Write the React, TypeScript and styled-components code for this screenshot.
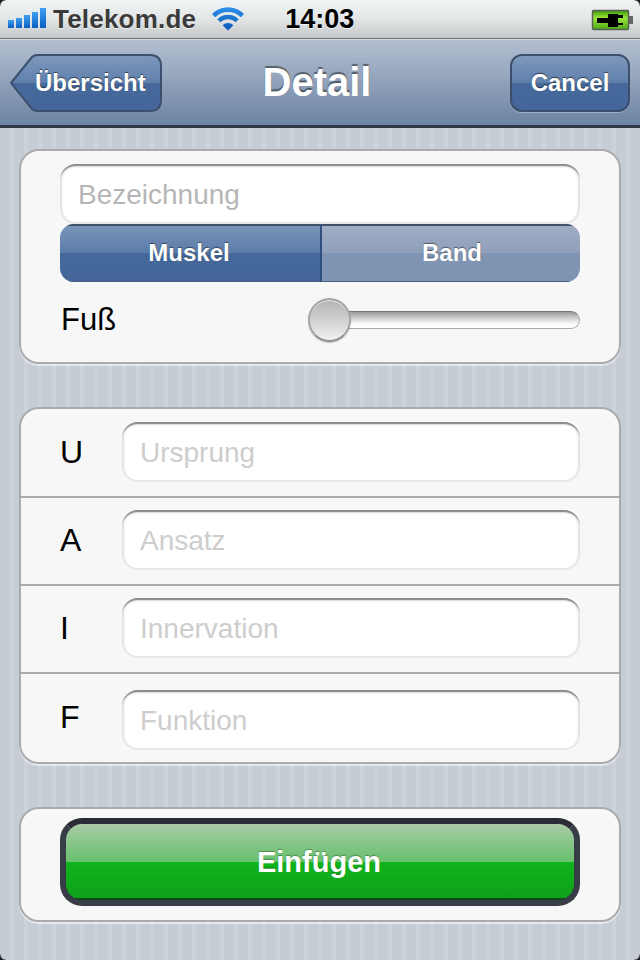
import * as React from 'react';
import styled, { createGlobalStyle } from 'styled-components';

const GlobalStyle = createGlobalStyle`
  html, body {
    margin: 0;
    padding: 0;
    background: #c5ccd4;
  }
  * {
    box-sizing: border-box;
  }
`;

const Screen = styled.div`
  position: relative;
  width: 640px;
  height: 960px;
  overflow: hidden;
  font-family: "Liberation Sans", Arial, sans-serif;
  background: repeating-linear-gradient(90deg, #c5ccd4 0 10px, #cbd2d9 10px 14px);
`;

const Corner = styled.div<{ $right?: boolean; $bottom?: boolean }>`
  position: absolute;
  width: 6px;
  height: 6px;
  ${(p) => (p.$right ? 'right: 0;' : 'left: 0;')}
  ${(p) => (p.$bottom ? 'bottom: 0;' : 'top: 0;')}
  background: radial-gradient(
    circle at ${(p) => (p.$right ? '0' : '100%')} ${(p) => (p.$bottom ? '0' : '100%')},
    transparent 5px,
    #222 6.5px
  );
`;

const StatusBar = styled.div`
  display: flex;
  align-items: center;
  height: 40px;
  padding: 0 6px 1px 8px;
  background: linear-gradient(#f1f4f4, #e4e7e7 45%, #c6c9c9 94%, #6e7277 95%, #6e7277 98%, #d5d8dc 98%);
`;

const SignalBars = styled.svg`
  margin-top: -2px;
`;

const Carrier = styled.span`
  margin-left: 7px;
  font-size: 26px;
  font-weight: bold;
  letter-spacing: 0.2px;
  color: #3a3a3a;
  text-shadow: 0 1px 0 rgba(255, 255, 255, 0.7);
`;

const WifiIcon = styled.svg`
  margin-left: 16px;
  margin-top: -1px;
`;

const Clock = styled.span`
  margin-left: 41px;
  font-size: 27px;
  font-weight: bold;
  color: #000;
  text-shadow: 0 1px 0 rgba(255, 255, 255, 0.7);
`;

const BatteryIcon = styled.svg`
  margin-left: auto;
`;

const NavBar = styled.div`
  display: flex;
  align-items: flex-start;
  height: 88px;
  padding: 14px 10px 0;
  background: linear-gradient(#b3bfd0, #6c83a3 97%, #2f3742 97%);
`;

const BackButton = styled.div`
  position: relative;
  display: flex;
  align-items: center;
  width: 152px;
  height: 58px;
  padding-left: 25px;
`;

const BackShape = styled.svg`
  position: absolute;
  top: 0;
  left: 0;
`;

const BarLabel = styled.span`
  position: relative;
  font-size: 24px;
  font-weight: bold;
  color: #fff;
  text-shadow: 0 -1px 1px rgba(0, 0, 0, 0.55);
`;

const Title = styled.div`
  flex: 1;
  padding-right: 38px;
  margin-top: 3px;
  text-align: center;
  font-size: 40px;
  font-weight: bold;
  line-height: 50px;
  color: #fff;
  text-shadow: 0 -2px 1px rgba(0, 0, 0, 0.45);
`;

const CancelButton = styled.div`
  display: flex;
  align-items: center;
  justify-content: center;
  width: 120px;
  height: 58px;
  border: 2px solid #3c506e;
  border-radius: 12px;
  background: linear-gradient(#7f98bc, #5f80ac 50%, #46699b 50%, #44669a);
  box-shadow: 0 1px 0 rgba(255, 255, 255, 0.3);
`;

const Content = styled.div`
  display: flex;
  flex-direction: column;
  gap: 43px;
  padding: 21px 19px 0;
`;

const Group = styled.div`
  background: #f7f7f7;
  border: 2px solid #ababae;
  border-radius: 20px;
  box-shadow: 0 2px 0 rgba(255, 255, 255, 0.55);
  overflow: hidden;
`;

const TopGroup = styled(Group)`
  height: 215px;
  padding: 13px 39px 0;
`;

const Field = styled.input<{ $faint?: boolean }>`
  display: block;
  width: 100%;
  height: 60px;
  flex: 1;
  padding: 2px 18px 0;
  border: 0;
  border-radius: 16px;
  outline: none;
  background: #fff;
  font-family: inherit;
  font-size: 28px;
  box-shadow:
    inset 0 3px 1px -1px #8a8a8a,
    inset 0 5px 3px -3px #c4c4c4,
    inset 3px 0 2px -1px #e2e2e2,
    inset -3px 0 2px -1px #e2e2e2,
    inset 0 -3px 0 -1px #e8e8e8;
  &::placeholder {
    color: ${(p) => (p.$faint ? '#cdcdcd' : '#b6b6b6')};
    opacity: 1;
  }
`;

const Segments = styled.div`
  display: flex;
  height: 58px;
  border-radius: 14px;
  overflow: hidden;
`;

const Segment = styled.div<{ $active?: boolean }>`
  display: flex;
  align-items: center;
  justify-content: center;
  width: ${(p) => (p.$active ? '262px' : '258px')};
  padding: ${(p) => (p.$active ? '0 2px 0 0' : '0 0 0 2px')};
  font-size: 24px;
  font-weight: bold;
  color: #fff;
  text-shadow: 0 -1px 1px rgba(0, 0, 0, 0.45);
  border-right: ${(p) => (p.$active ? '2px solid #2f4f80' : '0')};
  box-shadow: inset 0 2px 0 #3f5068, inset 0 -1px 0 #4a5f80;
  background: ${(p) =>
    p.$active
      ? 'linear-gradient(#7d96ba, #5a7ba8 50%, #46699b 50%, #44669a)'
      : 'linear-gradient(#a1afc5, #8f9fba 50%, #8094b3 50%, #7e92b1)'};
`;

const SliderRow = styled.div`
  display: flex;
  align-items: center;
  justify-content: space-between;
  height: 44px;
  margin-top: 16px;
`;

const RowName = styled.span`
  margin-left: 1px;
  font-size: 31px;
  color: #000;
`;

const Slider = styled.div`
  position: relative;
  display: flex;
  align-items: center;
  justify-content: flex-end;
  width: 272px;
  height: 44px;
`;

const Track = styled.div`
  width: 240px;
  height: 18px;
  border: 1px solid #a9a9a9;
  border-top-color: #777;
  border-radius: 0 9px 9px 0;
  background: linear-gradient(#9a9a9a, #d8d8d8 45%, #fbfbfb 75%, #fff);
`;

const Thumb = styled.div`
  position: absolute;
  top: 0;
  left: 0;
  width: 43px;
  height: 44px;
  border-radius: 50%;
  border: 2px solid #a4a4a4;
  border-bottom-color: #8c8c8c;
  background: linear-gradient(#b4b4b4, #d6d6d6 60%, #f0f0f0);
  box-shadow: inset 0 1px 0 #e6e6e6, 0 1px 1px rgba(0, 0, 0, 0.25);
`;

const FieldRow = styled.div<{ $top: number; $height: number; $last?: boolean }>`
  display: flex;
  align-items: flex-start;
  height: ${(p) => p.$height}px;
  padding: ${(p) => p.$top}px 39px 0;
  border-bottom: ${(p) => (p.$last ? '0' : '2px solid #ababae')};
`;

const FieldLetter = styled.span<{ $lift: number }>`
  flex: none;
  width: 62px;
  margin-top: ${(p) => -p.$lift}px;
  line-height: 60px;
  font-size: 32px;
  color: #000;
`;

const ActionGroup = styled(Group)`
  height: 115px;
  padding: 9px 39px 0;
`;

const InsertButton = styled.div`
  display: flex;
  align-items: center;
  justify-content: center;
  height: 88px;
  padding-right: 2px;
  border: 6px solid #383c46;
  border-top-color: #2b2e37;
  border-radius: 22px;
  font-size: 29px;
  font-weight: bold;
  color: #fff;
  text-shadow: 0 -1px 1px rgba(0, 0, 0, 0.3);
  background: linear-gradient(#a9cba5, #66c06c 50%, #10b51b 50%, #0f9f1c 98%, #0b4a12 98%);
`;

function SignalIcon(): JSX.Element {
  const bars = [
    { x: 0, y: 12, h: 8 },
    { x: 8, y: 10, h: 10 },
    { x: 16, y: 7, h: 13 },
    { x: 24, y: 4, h: 16 },
    { x: 32, y: 0, h: 20 },
  ];
  return (
    <SignalBars width="38" height="21" viewBox="0 0 38 21">
      <defs>
        <linearGradient id="signal" x1="0" y1="0" x2="0" y2="1">
          <stop offset="0" stopColor="#3fa0f2" />
          <stop offset="1" stopColor="#0b5ec4" />
        </linearGradient>
      </defs>
      {bars.map((bar) => (
        <rect key={bar.x} x={bar.x} y={bar.y} width="6" height={bar.h} fill="url(#signal)" />
      ))}
    </SignalBars>
  );
}

function Wifi(): JSX.Element {
  return (
    <WifiIcon width="32" height="24" viewBox="0 0 32 24">
      <defs>
        <linearGradient id="wifi" gradientUnits="userSpaceOnUse" x1="0" y1="0" x2="0" y2="24">
          <stop offset="0" stopColor="#2f92ea" />
          <stop offset="1" stopColor="#0a54b6" />
        </linearGradient>
      </defs>
      <path d="M1.6 8.6A20.4 20.4 0 0 1 30.4 8.6" fill="none" stroke="url(#wifi)" strokeWidth="4.6" />
      <path d="M6.8 13.8A13 13 0 0 1 25.2 13.8" fill="none" stroke="url(#wifi)" strokeWidth="4.4" />
      <path d="M16 23.6L10.6 18.2A7.6 7.6 0 0 1 21.4 18.2Z" fill="url(#wifi)" />
    </WifiIcon>
  );
}

function Battery(): JSX.Element {
  return (
    <BatteryIcon width="43" height="22" viewBox="0 0 43 22">
      <defs>
        <linearGradient id="charge" x1="0" y1="0" x2="0" y2="1">
          <stop offset="0" stopColor="#3c9a0c" />
          <stop offset="0.4" stopColor="#9ae636" />
          <stop offset="1" stopColor="#4aa816" />
        </linearGradient>
      </defs>
      <rect x="1.5" y="1.5" width="36" height="19" rx="1" fill="url(#charge)" stroke="#5a5f58" strokeWidth="1.5" />
      <rect x="38" y="7" width="4" height="8" fill="#666" />
      <path d="M6 9H17V5H27V6H32V9H27V14H32V16H27V18H17V14H6Z" fill="#000" />
    </BatteryIcon>
  );
}

function BackPlate(): JSX.Element {
  return (
    <BackShape width="152" height="58" viewBox="0 0 152 58">
      <defs>
        <linearGradient id="back" x1="0" y1="0" x2="0" y2="1">
          <stop offset="0" stopColor="#7f98bc" />
          <stop offset="0.5" stopColor="#5f80ac" />
          <stop offset="0.5" stopColor="#46699b" />
          <stop offset="1" stopColor="#44669a" />
        </linearGradient>
      </defs>
      <path
        d="M1 29L22 3Q24 1 28 1H140Q151 1 151 12V46Q151 57 140 57H28Q24 57 22 55Z"
        fill="url(#back)"
        stroke="#3c506e"
        strokeWidth="2"
      />
    </BackShape>
  );
}

const fields = [
  { letter: 'U', placeholder: 'Ursprung', top: 13, height: 89, lift: 0 },
  { letter: 'A', placeholder: 'Ansatz', top: 12, height: 88, lift: 0 },
  { letter: 'I', placeholder: 'Innervation', top: 12, height: 88, lift: 0 },
  { letter: 'F', placeholder: 'Funktion', top: 16, height: 88, lift: 3, last: true },
];

export default function App(): JSX.Element {
  return (
    <Screen>
      <GlobalStyle />
      <StatusBar>
        <SignalIcon />
        <Carrier>Telekom.de</Carrier>
        <Wifi />
        <Clock>14:03</Clock>
        <Battery />
      </StatusBar>
      <NavBar>
        <BackButton>
          <BackPlate />
          <BarLabel>Übersicht</BarLabel>
        </BackButton>
        <Title>Detail</Title>
        <CancelButton>
          <BarLabel>Cancel</BarLabel>
        </CancelButton>
      </NavBar>
      <Content>
        <TopGroup>
          <Field placeholder="Bezeichnung" readOnly />
          <Segments>
            <Segment $active>Muskel</Segment>
            <Segment>Band</Segment>
          </Segments>
          <SliderRow>
            <RowName>Fuß</RowName>
            <Slider>
              <Track />
              <Thumb />
            </Slider>
          </SliderRow>
        </TopGroup>
        <Group>
          {fields.map((field) => (
            <FieldRow key={field.letter} $top={field.top} $height={field.height} $last={field.last}>
              <FieldLetter $lift={field.lift}>{field.letter}</FieldLetter>
              <Field $faint placeholder={field.placeholder} readOnly />
            </FieldRow>
          ))}
        </Group>
        <ActionGroup>
          <InsertButton>Einfügen</InsertButton>
        </ActionGroup>
      </Content>
      <Corner />
      <Corner $right />
      <Corner $bottom />
      <Corner $right $bottom />
    </Screen>
  );
}
